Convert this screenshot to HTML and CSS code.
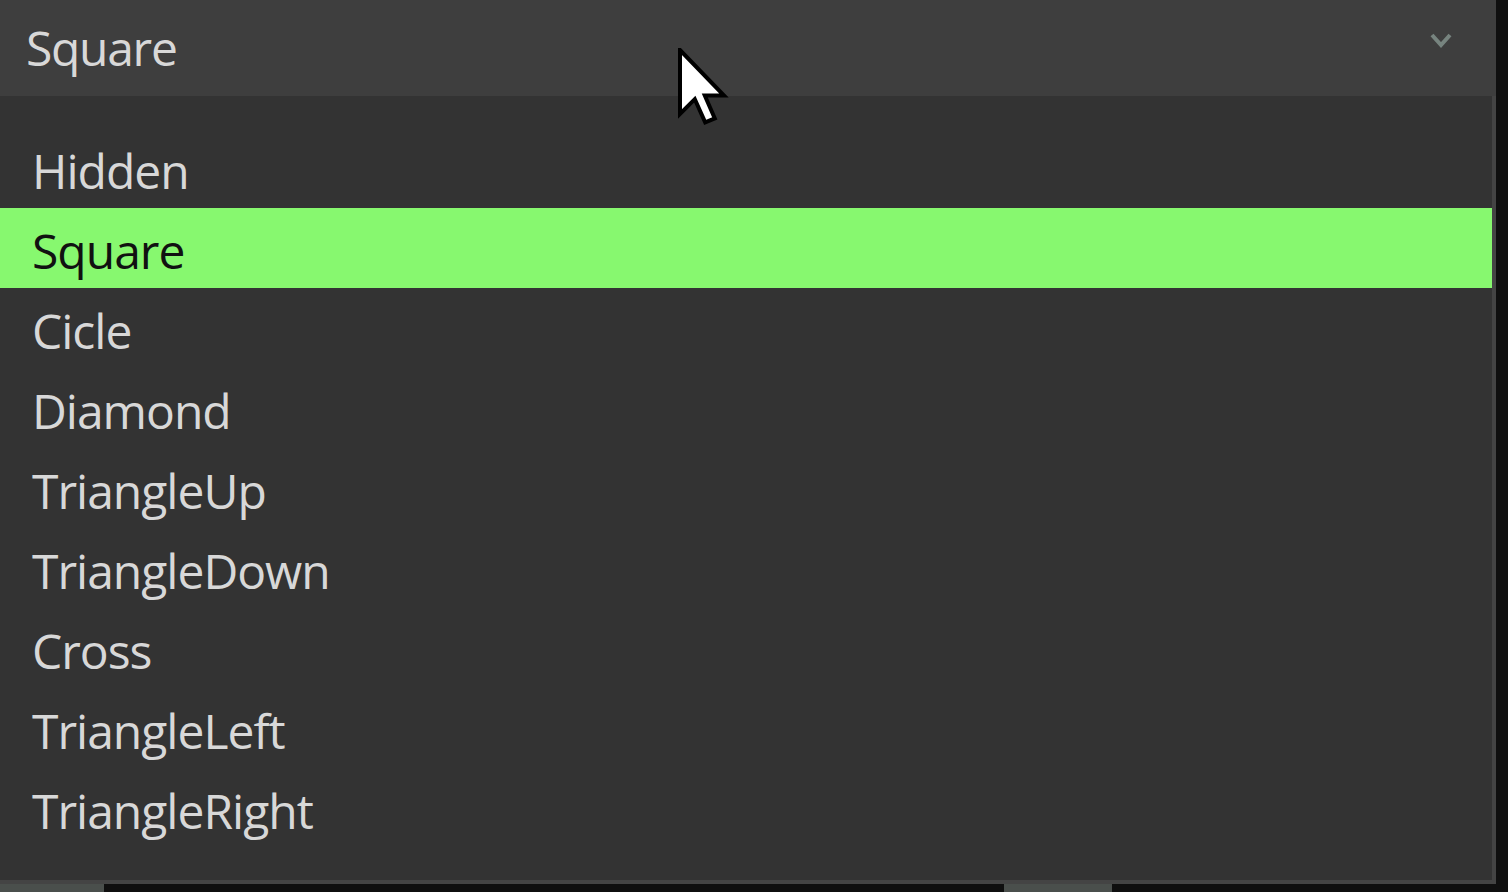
FILE: index.html
```html
<!DOCTYPE html>
<html lang="en">

<head>
    <meta charset="UTF-8">
    <meta name="viewport" content="width=device-width, initial-scale=1.0">
    <title>Marker shape</title>
    <link rel="stylesheet" href="styles.css">
</head>

<body>
    <div class="combo">
        <div class="combo-head">
            <span class="combo-value">Square</span>
            <svg class="chevron" width="22" height="16" viewBox="0 0 22 16">
                <polyline points="2,2 11,12 20,2" fill="none" stroke="#77847f" stroke-width="4" />
            </svg>
        </div>
        <ul class="popup">
            <li class="item">Hidden</li>
            <li class="item selected">Square</li>
            <li class="item">Cicle</li>
            <li class="item">Diamond</li>
            <li class="item">TriangleUp</li>
            <li class="item">TriangleDown</li>
            <li class="item">Cross</li>
            <li class="item">TriangleLeft</li>
            <li class="item">TriangleRight</li>
        </ul>
    </div>
    <div class="underlay">
        <span class="blob blob-a"></span>
        <span class="blob blob-b"></span>
    </div>
    <svg class="cursor" width="52" height="80" viewBox="0 0 13 20">
        <polygon points="0.5,0.5 0.5,16.5 4.2,12.8 6.8,18.6 9.2,17.6 6.7,11.9 11.5,11.9"
            fill="#fff" stroke="#000" stroke-width="1" stroke-linejoin="miter" />
    </svg>
</body>

</html>
```

FILE: styles.css
```css
:root {
    --page-bg: #0f0f0f;
    --head-bg: #3e3e3e;
    --popup-bg: #333333;
    --popup-border: #444444;
    --text-color: #d8d8d8;
    --highlight: #87f86f;
}

body {
    margin: 0;
    background: var(--page-bg);
    font-family: "Open Sans", "Noto Sans", sans-serif;
    overflow: hidden;
}

.combo {
    width: 1496px;
    display: flex;
    flex-direction: column;
}

.combo-head {
    height: 96px;
    background: var(--head-bg);
    display: flex;
    align-items: center;
    justify-content: space-between;
    padding: 0 44px 0 26px;
    box-sizing: border-box;
}

.combo-value {
    font-size: 48px;
    letter-spacing: -1.3px;
    color: var(--text-color);
    margin-top: -2px;
}

.chevron {
    margin-top: -14px;
}

.popup {
    list-style: none;
    margin: 0;
    padding: 32px 0;
    background: var(--popup-bg);
    border-right: 4px solid var(--popup-border);
    border-bottom: 4px solid var(--popup-border);
}

.item {
    height: 74px;
    line-height: 74px;
    padding: 6px 0 0 32px;
    font-size: 48px;
    letter-spacing: -1px;
    color: var(--text-color);
}

.item.selected {
    background: var(--highlight);
    color: #111;
}

.underlay {
    height: 8px;
    display: flex;
    gap: 900px;
}

.blob {
    display: block;
    height: 8px;
    background: #4a4f4c;
}

.blob-a {
    width: 104px;
}

.blob-b {
    width: 108px;
}

.cursor {
    position: absolute;
    left: 678px;
    top: 48px;
}
```
